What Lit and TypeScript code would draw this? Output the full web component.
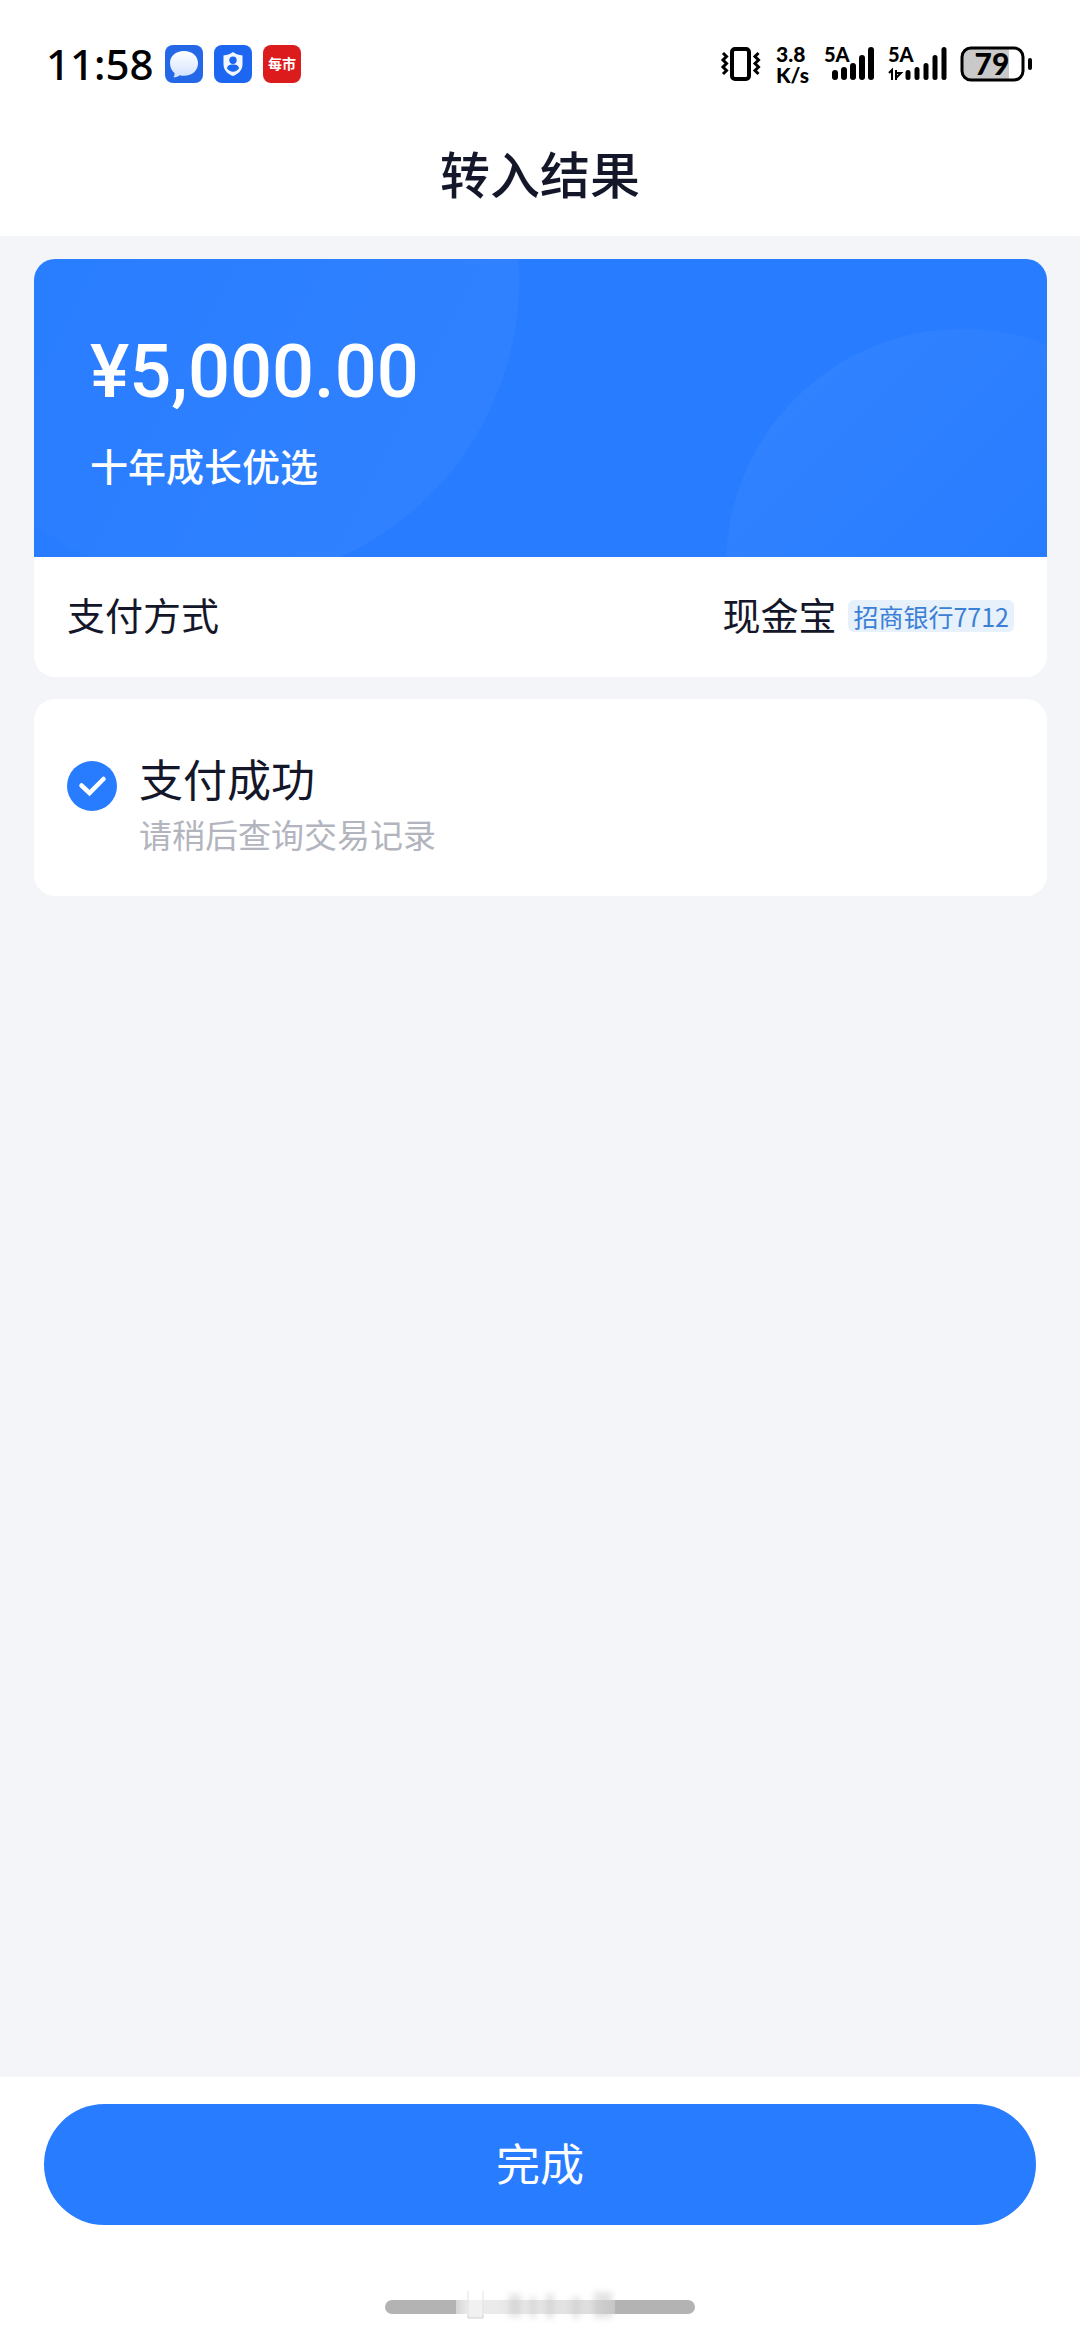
import { LitElement, html, css, svg } from "lit";
import { customElement, property } from "lit/decorators.js";

const strokeBars = (xs: number[], tops: number[], width: number) =>
  xs.map(
    (x, i) => svg`<line x1=${x} x2=${x} y1=${tops[i] + width / 2} y2=${34 - width / 2}
      stroke="#000" stroke-width=${width} stroke-linecap="round"></line>`
  );

@customElement("status-bar")
export class StatusBar extends LitElement {
  static styles = css`
    :host {
      display: flex;
      align-items: center;
      justify-content: space-between;
      height: 80px;
      padding: 24px 48px 0 46px;
      color: #000;
      font-family: "Noto Sans", "Noto Sans CJK SC", sans-serif;
    }
    .group {
      display: flex;
      align-items: center;
    }
    .apps {
      gap: 11px;
    }
    .time {
      font-size: 42px;
      line-height: 48px;
      font-weight: 500;
    }
    .indicators {
      gap: 14px;
    }
    .speed {
      display: flex;
      flex-direction: column;
      width: 34px;
      font-family: Lato, sans-serif;
      font-size: 21px;
      line-height: 21px;
      font-weight: 900;
    }
    svg {
      display: block;
      overflow: visible;
    }
    .label {
      font-family: Lato, sans-serif;
      font-size: 20px;
      font-weight: 900;
    }
    .charge {
      font-family: Lato, sans-serif;
      font-size: 30px;
      font-weight: 900;
    }
    .news {
      font-size: 14px;
      font-weight: 700;
      font-family: "Noto Sans CJK SC", sans-serif;
    }
  `;

  render() {
    return html`
      <div class="group apps">
        <span class="time">11:58</span>
        <svg width="38" height="38" viewBox="0 0 38 38" aria-hidden="true">
          <defs>
            <linearGradient id="bubble" x1="0" y1="0" x2="0" y2="1">
              <stop offset="0" stop-color="#fff"></stop>
              <stop offset="1" stop-color="#d3e2ff"></stop>
            </linearGradient>
          </defs>
          <rect width="38" height="38" rx="8" fill="#2468e8"></rect>
          <path
            d="M19 6C10.500 6 5 11 5 18c0 4.500 2 8 4.500 10 .3 1.500-.1 3-1.200 4.200 2.600.2 4.800-.6 6.400-2 1.400.4 2.800.5 4.300.5 8.500 0 14-5.500 14-12.500S27.500 6 19 6z"
            fill="url(#bubble)"
          ></path>
        </svg>
        <svg width="38" height="38" viewBox="0 0 38 38" aria-hidden="true">
          <rect width="38" height="38" rx="8" fill="#1c66f2"></rect>
          <path
            d="M19 7c3 2.200 6 3.200 9.500 3.400v8.800c0 5.800-4 9.600-9.500 11.800-5.500-2.200-9.500-6-9.500-11.800v-8.800C13 10.200 16 9.200 19 7z"
            fill="#f2f7ff"
          ></path>
          <circle cx="19" cy="15.300" r="3.700" fill="#1c66f2"></circle>
          <path d="M13 23.600c0-2.800 2.400-4.200 6-4.200s6 1.400 6 4.200c-1.500 2-3.500 3.200-6 3.200s-4.500-1.200-6-3.200z" fill="#1c66f2"></path>
        </svg>
        <svg width="38" height="38" viewBox="0 0 38 38" role="img" aria-label="每市">
          <rect width="38" height="38" rx="8" fill="#dc1c1c"></rect>
          <text class="news" x="19" y="24" text-anchor="middle" fill="#fff">每市</text>
        </svg>
      </div>
      <div class="group indicators">
        <svg width="42" height="36" viewBox="0 0 42 36" aria-hidden="true" fill="none" stroke="#000">
          <rect x="12" y="3" width="17" height="30" rx="3" stroke-width="4"></rect>
          <path d="M3 7l3.500 3.500L3 14l3.500 3.500L3 21l3.500 3.500L3 28M38.500 7L35 10.500l3.500 3.500-3.500 3.500 3.500 3.500-3.500 3.500 3.500 3.500" stroke-width="3"></path>
        </svg>
        <div class="speed"><span>3.8</span><span>K/s</span></div>
        <svg width="50" height="36" viewBox="0 0 50 36" role="img" aria-label="5A">
          <text class="label" x="0" y="16">5A</text>
          ${strokeBars([11, 20, 29, 38, 47], [24, 21, 17, 9, 1], 6)}
        </svg>
        <svg width="58" height="36" viewBox="0 0 58 36" role="img" aria-label="5A">
          <text class="label" x="0" y="16">5A</text>
          <path d="M1 27l3-3v10M8 24v10M8 32l5-5H8" fill="none" stroke="#000" stroke-width="2"></path>
          ${strokeBars([20, 29, 38, 47, 56], [24, 21, 17, 9, 1], 5)}
        </svg>
        <svg width="72" height="36" viewBox="0 0 72 36" role="img" aria-label="79%">
          <path d="M11 2h38v32H11a9 9 0 0 1-9-9V11a9 9 0 0 1 9-9z" fill="#c9c9c9"></path>
          <rect x="2" y="2" width="61" height="32" rx="9" fill="none" stroke="#000" stroke-width="3"></rect>
          <rect x="68" y="12" width="4" height="12" rx="2" fill="#000"></rect>
          <text class="charge" x="32" y="29" text-anchor="middle">79</text>
        </svg>
      </div>
    `;
  }
}

@customElement("amount-panel")
export class AmountPanel extends LitElement {
  @property() amount = "";
  @property() product = "";

  static styles = css`
    :host {
      display: block;
      position: relative;
      overflow: hidden;
      padding: 69px 56px 65px;
      background: #277cff;
      color: #fff;
    }
    .waves {
      position: absolute;
      inset: 0;
      width: 100%;
      height: 100%;
    }
    .text {
      position: relative;
    }
    .amount {
      margin: 0 0 22px;
      font: 500 74px/88px Roboto, sans-serif;
    }
    .product {
      margin: 0;
      font-size: 38px;
      line-height: 54px;
      font-weight: 500;
    }
  `;

  render() {
    return html`
      <svg class="waves" viewBox="0 0 1013 298" preserveAspectRatio="none" aria-hidden="true">
        <defs>
          <linearGradient id="left" x1="0.3" y1="0.4" x2="0.9" y2="0.7">
            <stop offset="0" stop-color="#fff" stop-opacity="0.01"></stop>
            <stop offset="1" stop-color="#fff" stop-opacity="0.04"></stop>
          </linearGradient>
          <linearGradient id="right" x1="0.1" y1="0.1" x2="0.6" y2="0.6">
            <stop offset="0" stop-color="#fff" stop-opacity="0.05"></stop>
            <stop offset="1" stop-color="#fff" stop-opacity="0"></stop>
          </linearGradient>
        </defs>
        <circle cx="181" cy="21" r="304" fill="url(#left)"></circle>
        <circle cx="929" cy="307" r="237" fill="url(#right)"></circle>
      </svg>
      <div class="text">
        <p class="amount">${this.amount}</p>
        <p class="product">${this.product}</p>
      </div>
    `;
  }
}

@customElement("app-root")
export class AppRoot extends LitElement {
  static styles = css`
    :host {
      display: flex;
      flex-direction: column;
      min-height: 100vh;
      background: #fff;
      color: #14172a;
      font-family: "Noto Sans CJK SC", sans-serif;
    }
    .title {
      margin: 0;
      padding: 38px 0 34px;
      text-align: center;
      font-size: 50px;
      line-height: 60px;
      font-weight: 500;
    }
    .content {
      flex: 1;
      display: flex;
      flex-direction: column;
      gap: 22px;
      padding: 23px 33px 23px 34px;
      background: #f3f5f9;
    }
    .card {
      overflow: hidden;
      border-radius: 21px;
      background: #fff;
    }
    .row {
      display: flex;
      align-items: center;
      justify-content: space-between;
      margin: 0;
      padding: 29px 33px 35px;
      font-size: 38px;
      line-height: 56px;
    }
    .method {
      display: flex;
      align-items: center;
      gap: 12px;
      margin: 0;
    }
    .tag {
      margin-top: 4px;
      padding: 0 5px;
      border-radius: 6px;
      background: #e6f1fc;
      color: #3b80d4;
      font-size: 25px;
      line-height: 32px;
    }
    .result {
      display: flex;
      align-items: flex-start;
      gap: 22px;
      padding: 51px 33px 38px;
    }
    .check {
      flex: none;
      display: block;
      padding-top: 11px;
    }
    .status {
      margin: 0 0 4px;
      font-size: 44px;
      line-height: 56px;
      font-weight: 400;
    }
    .hint {
      margin: 0;
      font-size: 33px;
      line-height: 48px;
      color: #b2b4be;
    }
    .footer {
      display: flex;
      flex-direction: column;
      align-items: center;
      gap: 75px;
      padding: 27px 44px 16px;
    }
    .done {
      width: 100%;
      padding: 26px 0 31px;
      border: 0;
      border-radius: 61px;
      background: #277cff;
      color: #fff;
      font-family: inherit;
      font-size: 44px;
      line-height: 64px;
      cursor: pointer;
    }
    .home {
      display: block;
      overflow: visible;
    }
  `;

  render() {
    return html`
      <header>
        <status-bar></status-bar>
        <h1 class="title">转入结果</h1>
      </header>
      <main class="content">
        <section class="card">
          <amount-panel amount="¥5,000.00" product="十年成长优选"></amount-panel>
          <dl class="row">
            <dt>支付方式</dt>
            <dd class="method"><span>现金宝</span><span class="tag">招商银行7712</span></dd>
          </dl>
        </section>
        <section class="card result">
          <svg class="check" width="50" height="50" viewBox="0 0 50 50" aria-hidden="true">
            <circle cx="25" cy="25" r="25" fill="#277cff"></circle>
            <path d="M14.500 24.500l8 7.500L36.500 18" fill="none" stroke="#fff" stroke-width="4.500" stroke-linecap="round"></path>
          </svg>
          <div>
            <h2 class="status">支付成功</h2>
            <p class="hint">请稍后查询交易记录</p>
          </div>
        </section>
      </main>
      <footer class="footer">
        <button class="done" type="button">完成</button>
        <svg class="home" width="310" height="14" viewBox="0 0 310 14" aria-hidden="true">
          <defs>
            <linearGradient id="fade" x1="0" y1="0" x2="1" y2="0">
              <stop offset="0" stop-color="#d4d4d4"></stop>
              <stop offset="0.08" stop-color="#ececec"></stop>
              <stop offset="0.3" stop-color="#eaeaea"></stop>
              <stop offset="0.6" stop-color="#e4e4e4"></stop>
              <stop offset="0.85" stop-color="#dedede"></stop>
              <stop offset="1" stop-color="#c4c4c4"></stop>
            </linearGradient>
            <filter id="soft" x="-20%" y="-60%" width="140%" height="220%">
              <feGaussianBlur stdDeviation="3"></feGaussianBlur>
            </filter>
          </defs>
          <rect width="310" height="14" rx="7" fill="#b3b3b3"></rect>
          <rect x="71" width="159" height="14" fill="url(#fade)"></rect>
          <g filter="url(#soft)" fill="#c8c8c8" opacity="0.5">
            <rect x="124" y="-6" width="12" height="23"></rect>
            <rect x="145" y="-3" width="6" height="21"></rect>
            <rect x="161" y="-6" width="8" height="24"></rect>
            <rect x="187" y="-3" width="8" height="21"></rect>
            <rect x="209" y="-8" width="18" height="26"></rect>
          </g>
          <rect x="83" width="15" height="18" fill="#f1f1f1"></rect>
          <path d="M83-9V16M98-9V16" stroke="#e2e2e2" stroke-width="1"></path>
          <path d="M83 15v3h15v-3" fill="none" stroke="#cfcfcf" stroke-width="1"></path>
        </svg>
      </footer>
    `;
  }
}
